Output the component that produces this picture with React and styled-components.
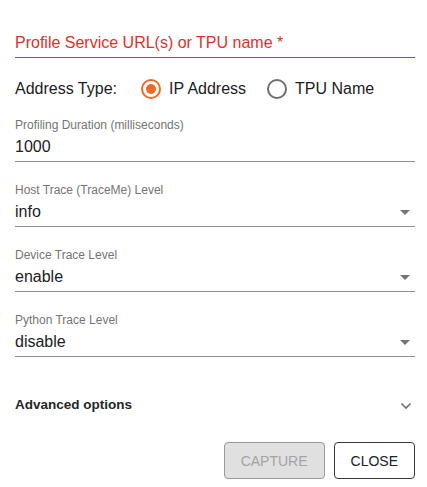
import React from 'react'
import styled, { createGlobalStyle } from 'styled-components'

const GlobalStyle = createGlobalStyle`
  body {
    margin: 0;
    background: #fff;
    font-family: "Liberation Sans", Arial, sans-serif;
    color: #212121;
  }
`

const ArrowDown = () => (
  <svg width="10" height="5" viewBox="0 0 10 5">
    <path d="M0 0 L5 5 L10 0 Z" fill="#757575" />
  </svg>
)

const ExpandMore = () => (
  <svg width="12" height="8" viewBox="0 0 12 8">
    <path d="M1.5 1.5 L6 6 L10.5 1.5" fill="none" stroke="#707070" strokeWidth="1.6" />
  </svg>
)

const Radio = ({ checked, label }) => (
  <RadioOption>
    <RadioCircle $checked={checked}>{checked && <RadioDot />}</RadioCircle>
    <RadioText>{label}</RadioText>
  </RadioOption>
)

const TextField = ({ label, value, first }) => (
  <Field $first={first}>
    <FieldLabel>{label}</FieldLabel>
    <FieldValue>{value}</FieldValue>
  </Field>
)

const SelectField = ({ label, value }) => (
  <Field>
    <FieldLabel>{label}</FieldLabel>
    <FieldValue>
      {value}
      <SelectArrow><ArrowDown /></SelectArrow>
    </FieldValue>
  </Field>
)

export default function App() {
  return (
    <>
      <GlobalStyle />
      <Dialog>
        <UrlField>Profile Service URL(s) or TPU name *</UrlField>

        <AddressRow>
          <RowLabel>Address Type:</RowLabel>
          <Radio checked label="IP Address" />
          <Radio label="TPU Name" />
        </AddressRow>

        <TextField first label="Profiling Duration (milliseconds)" value="1000" />
        <SelectField label="Host Trace (TraceMe) Level" value="info" />
        <SelectField label="Device Trace Level" value="enable" />
        <SelectField label="Python Trace Level" value="disable" />

        <AdvancedHeader>
          <span>Advanced options</span>
          <ChevronBox><ExpandMore /></ChevronBox>
        </AdvancedHeader>

        <Actions>
          <Button disabled>CAPTURE</Button>
          <Button>CLOSE</Button>
        </Actions>
      </Dialog>
    </>
  )
}

const Dialog = styled.div`
  width: 400px;
  padding: 0 12px 0 15px;
  display: flex;
  flex-direction: column;
`

const UrlField = styled.div`
  margin-top: 33px;
  font-size: 16px;
  line-height: 20px;
  color: #e0312b;
  padding-bottom: 4px;
  border-bottom: 1px solid #e0312b;
`

const AddressRow = styled.div`
  margin-top: 19px;
  height: 24px;
  display: flex;
  align-items: center;
  font-size: 16px;
  color: #212121;
`

const RowLabel = styled.span`
  margin-right: 24px;
`

const RadioOption = styled.label`
  display: flex;
  align-items: center;
  margin-right: 21px;
`

const RadioCircle = styled.span`
  box-sizing: border-box;
  width: 20px;
  height: 20px;
  border-radius: 50%;
  border: 2px solid ${p => (p.$checked ? '#ef6a24' : '#6e6e6e')};
  display: flex;
  align-items: center;
  justify-content: center;
  margin-right: 8px;
`

const RadioDot = styled.span`
  width: 10px;
  height: 10px;
  border-radius: 50%;
  background: #ef6a24;
`

const RadioText = styled.span`
  font-size: 16px;
`

const Field = styled.div`
  margin-top: ${p => (p.$first ? '16px' : '20px')};
  border-bottom: 1px solid #8f8f8f;
  padding-bottom: 4px;
`

const FieldLabel = styled.div`
  font-size: 12px;
  line-height: 16px;
  color: #757575;
  margin-bottom: 4px;
`

const FieldValue = styled.div`
  font-size: 16px;
  line-height: 20px;
  color: #212121;
  display: flex;
  align-items: center;
  justify-content: space-between;
`

const SelectArrow = styled.span`
  display: flex;
  margin-right: 5px;
`

const AdvancedHeader = styled.div`
  margin-top: 23px;
  height: 48px;
  display: flex;
  align-items: center;
  justify-content: space-between;
  font-size: 13.5px;
  font-weight: bold;
  color: #262626;
`

const ChevronBox = styled.span`
  display: flex;
  margin-right: 3px;
  margin-top: 3px;
`

const Actions = styled.div`
  margin-top: 14px;
  display: flex;
  justify-content: flex-end;
  gap: 9px;
`

const Button = styled.button`
  height: 37px;
  padding: 0 16px;
  border-radius: 4px;
  font-family: "Liberation Sans", Arial, sans-serif;
  font-size: 14px;
  font-weight: 500;
  border: 1px solid ${p => (p.disabled ? '#9a9a9a' : '#3a3a3a')};
  background: ${p => (p.disabled ? '#e0e0e0' : '#fff')};
  color: ${p => (p.disabled ? '#a3a3a3' : '#212121')};
`
